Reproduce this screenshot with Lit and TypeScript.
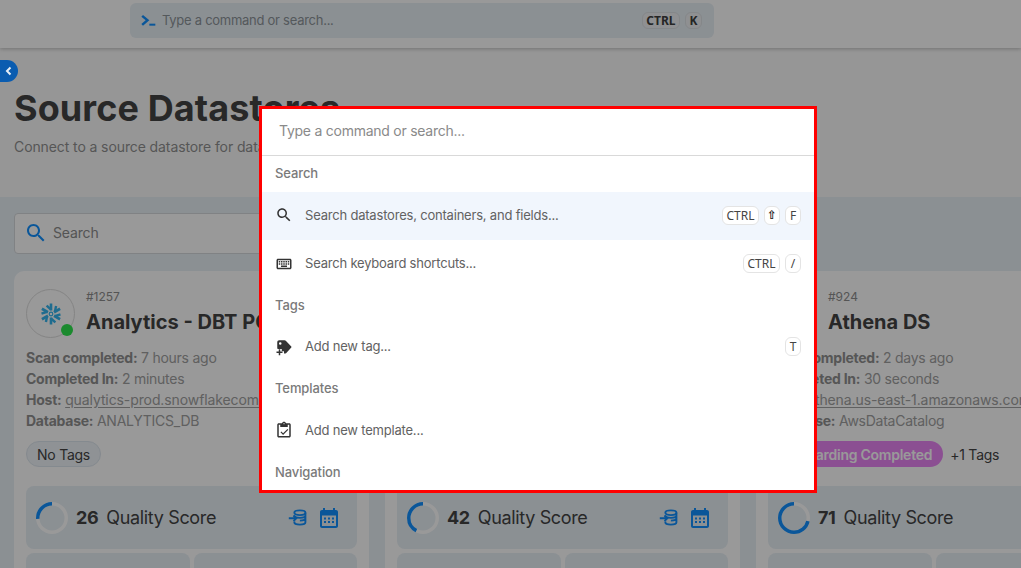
import { LitElement, css, html, svg } from "lit";
import { customElement, property } from "lit/decorators.js";

const icon = (body: unknown, size = 18) =>
  html`<svg width=${size} height=${size} viewBox="0 0 24 24" fill="currentColor">${body}</svg>`;

const ICONS = {
  search: svg`<path d="M15.5 14h-.79l-.28-.27C15.41 12.59 16 11.11 16 9.5 16 5.91 13.09 3 9.5 3S3 5.91 3 9.5 5.91 16 9.5 16c1.61 0 3.09-.59 4.23-1.57l.27.28v.79l5 4.99L20.49 19l-4.99-5zm-6 0C7.01 14 5 11.99 5 9.5S7.01 5 9.5 5 14 7.01 14 9.5 11.99 14 9.5 14z"/>`,
  keyboard: svg`<path d="M20 7v10H4V7h16m0-2H4c-1.1 0-1.99.9-1.99 2L2 17c0 1.1.9 2 2 2h16c1.1 0 2-.9 2-2V7c0-1.1-.9-2-2-2zm-9 3h2v2h-2zm0 3h2v2h-2zM8 8h2v2H8zm0 3h2v2H8zm-3 0h2v2H5zm0-3h2v2H5zm3 6h8v2H8zm6-3h2v2h-2zm0-3h2v2h-2zm3 3h2v2h-2zm0-3h2v2h-2z"/>`,
  tag: svg`<path fill-rule="evenodd" d="M3 5.5C3 4.1 4.1 3 5.5 3h7.2c.8 0 1.500.4 2 1l7 7.400c.4.4.4 1 0 1.400l-6.300 7c-.4.5-1 .7-1.600.7H12v-3H9v-3H4.500C3.600 14.500 3 14 3 13.500zM7 5.500a1.700 1.700 0 1 0 0 3.400 1.700 1.700 0 0 0 0-3.400z"/><path d="M5 15h2v3h3v2H7v3H5v-3H2v-2h3z"/>`,
  template: svg`<path d="M19 3h-4.180C14.400 1.840 13.300 1 12 1s-2.400.84-2.820 2H5c-1.100 0-2 .9-2 2v15c0 1.100.9 2 2 2h14c1.100 0 2-.9 2-2V5c0-1.100-.9-2-2-2zm-7-.25c.41 0 .75.34.75.75s-.34.75-.75.75-.75-.34-.75-.75.34-.75.75-.75zM19 20H5V5h2v3h10V5h2v15z"/><path d="m16.600 10.600 1.100 1.100-6.900 6.800-3.500-3.400 1.100-1.100 2.400 2.300z"/>`,
  prompt: svg`<path d="M2 5.500 4.500 3 14 11l-9.500 8L2 16.500 8.500 11z"/><rect x="14" y="16" width="9" height="3"/>`,
  calendar: svg`<path fill-rule="evenodd" d="M19 4h-1V2h-2v2H8V2H6v2H5C3.900 4 3 4.900 3 6v14c0 1.100.9 2 2 2h14c1.100 0 2-.9 2-2V6c0-1.100-.9-2-2-2zM5 9.500h14V20H5z"/><path d="M7 11.500h2v2H7zm4 0h2v2h-2zm4 0h2v2h-2zm-8 3.500h2v2H7zm4 0h2v2h-2zm4 0h2v2h-2z"/>`,
  database: svg`<g fill="none" stroke="currentColor" stroke-width="2.400"><ellipse cx="15" cy="6" rx="7" ry="3"/><path d="M8 9.500c0 1.700 3.100 3 7 3s7-1.300 7-3V6M8 17v1c0 1.700 3.100 3 7 3s7-1.300 7-3V6M22 13c0 1.700-3.100 3-7 3"/><path d="M1 13h9M7 9.500l3.500 3.500L7 16.500"/></g>`,
};

const snowflake = html`<svg width="24" height="24" viewBox="0 0 24 24" fill="none" stroke="#35b5ee">
  ${[0, 60, 120, 180, 240, 300].map(
    (a) => svg`<g transform="rotate(${a} 12 12)">
      <path d="M12 8.500V1.500" stroke-width="2.600"/>
      <path d="M7.600 3.600 12 7.500" stroke-width="2.400"/>
    </g>`
  )}
  <circle cx="12" cy="12" r="1.800" stroke-width="1.200"/>
</svg>`;

@customElement("score-ring")
export class ScoreRing extends LitElement {
  static styles = css`
    :host {
      display: block;
      width: 32px;
      height: 32px;
    }
    circle {
      fill: none;
      stroke-width: 3.5;
    }
    .track {
      stroke: #fff;
    }
    .value {
      stroke: #1190ff;
    }
  `;

  @property({ type: Number })
  value = 0;

  render() {
    const len = 2 * Math.PI * 14.25;
    return html`<svg width="32" height="32" viewBox="0 0 32 32">
      <circle class="track" cx="16" cy="16" r="14.25"></circle>
      <circle
        class="value"
        cx="16"
        cy="16"
        r="14.25"
        transform="translate(32 0) scale(-1 1) rotate(-90 16 16)"
        stroke-dasharray="${(len * this.value) / 100} ${len}"
      ></circle>
    </svg>`;
  }
}

interface Store {
  id?: string;
  name?: string;
  logo?: boolean;
  info?: [string, string, boolean?][];
  score: number;
  icons?: boolean;
  tags?: "none" | "onboarding";
}

const STORES: Store[] = [
  {
    id: "#1257",
    name: "Analytics - DBT POC",
    logo: true,
    info: [
      ["Scan completed:", "7 hours ago"],
      ["Completed In:", "2 minutes"],
      ["Host:", "qualytics-prod.snowflakecomputing.com", true],
      ["Database:", "ANALYTICS_DB"],
    ],
    score: 26,
    icons: true,
    tags: "none",
  },
  { score: 42, icons: true },
  {
    id: "#924",
    name: "Athena DS",
    info: [
      ["Scan completed:", "2 days ago"],
      ["Completed In:", "30 seconds"],
      ["Host:", "athena.us-east-1.amazonaws.com", true],
      ["Database:", "AwsDataCatalog"],
    ],
    score: 71,
    tags: "onboarding",
  },
];

@customElement("app-root")
export class AppRoot extends LitElement {
  static styles = css`
    :host {
      display: block;
      position: relative;
      width: 1021px;
      height: 568px;
      overflow: hidden;
      background: #fbfbfb;
      color: #444;
      font-family: Inter, "Noto Sans", "Liberation Sans", sans-serif;
    }

    .topbar {
      height: 48px;
      box-sizing: border-box;
      padding: 3px 0 0 130px;
      background: #fff;
      box-shadow: 0 1px 4px rgba(0, 0, 0, 0.25);
      position: relative;
    }
    .cmd {
      width: 584px;
      height: 35px;
      box-sizing: border-box;
      padding: 0 12px 0 10px;
      display: flex;
      align-items: center;
      border-radius: 6px;
      background: #e8f0f6;
      color: #1190ff;
      font-size: 13px;
      letter-spacing: -0.27px;
    }
    .cmd span {
      margin-left: 6px;
      padding-bottom: 2px;
      flex: 1;
      color: #8d9499;
    }

    .keys {
      display: flex;
      gap: 5px;
    }
    kbd {
      height: 17px;
      padding: 0 3.5px;
      min-width: 7px;
      box-sizing: content-box;
      display: flex;
      align-items: center;
      justify-content: center;
      border: 1px solid #e4e4e4;
      border-radius: 6px;
      background: #fff;
      color: #444;
      font: 400 12px "Noto Sans", sans-serif;
      letter-spacing: 0;
    }
    kbd.symbol {
      color: #222;
      font: 700 12px "DejaVu Sans", sans-serif;
      padding: 0 2px;
    }
    .cmd kbd {
      background: #eef1f3;
      border-color: #dde1e4;
      color: #3e3e3e;
      font-weight: 700;
      height: 15px;
    }

    .head {
      height: 149px;
      box-sizing: border-box;
      padding: 38px 14px 0;
    }
    h1 {
      margin: 0;
      font-size: 36px;
      line-height: 44px;
      font-weight: 700;
      letter-spacing: 0.1px;
    }
    .sub {
      margin: 7px 0 0;
      font-size: 14px;
      line-height: 20px;
      color: #909090;
      letter-spacing: -0.1px;
    }

    .band {
      height: 371px;
      box-sizing: border-box;
      padding: 16px 14px 0;
      background: #e8f0f6;
    }
    .filter {
      width: 500px;
      height: 41px;
      box-sizing: border-box;
      padding: 0 9px 2px;
      display: flex;
      align-items: center;
      gap: 5px;
      border: 1px solid #d5d9dc;
      border-radius: 4px;
      background: #fff;
      color: #1190ff;
      font-size: 14px;
      letter-spacing: -0.15px;
    }
    .filter span {
      color: #8c8c8c;
    }

    .cards {
      margin-top: 17px;
      display: grid;
      grid-template-columns: repeat(3, 355px);
      gap: 16px;
    }
    .card {
      height: 330px;
      box-sizing: border-box;
      padding: 18px 12px 0;
      background: #fff;
      border-radius: 10px;
    }
    .body {
      height: 197px;
    }
    .title {
      display: flex;
      gap: 11px;
      height: 49px;
    }
    .logo {
      position: relative;
      width: 47px;
      height: 47px;
      flex: none;
      display: flex;
      align-items: center;
      justify-content: center;
      border: 1px solid #ddd;
      border-radius: 50%;
    }
    .dot {
      position: absolute;
      right: 1px;
      bottom: 1px;
      width: 12px;
      height: 12px;
      border-radius: 50%;
      background: #2de64e;
    }
    .id {
      font-size: 12px;
      line-height: 16px;
      color: #8e8e8e;
    }
    .name {
      margin-top: 3px;
      font-size: 20px;
      line-height: 28px;
      font-weight: 700;
      white-space: nowrap;
    }
    .info {
      margin-top: 9px;
      font-size: 14px;
      line-height: 21px;
      color: #a0a0a0;
      white-space: nowrap;
      letter-spacing: -0.25px;
    }
    .info b {
      font-weight: 700;
      color: #909090;
    }
    .info u {
      letter-spacing: -0.1px;
      text-underline-offset: 2px;
    }
    .tags {
      margin-top: 10px;
      display: flex;
      align-items: center;
      gap: 7px;
      font-size: 14px;
      letter-spacing: -0.25px;
    }
    .pill {
      height: 26px;
      box-sizing: border-box;
      padding: 0 10px;
      display: flex;
      align-items: center;
      border-radius: 13px;
    }
    .pill.none {
      border: 1px solid #dde6ee;
      background: #eef3f8;
    }
    .pill.onboarding {
      padding: 0 11px 0 12px;
      background: #e884f4;
      color: #fff;
      font-weight: 600;
    }

    .score {
      height: 63px;
      box-sizing: border-box;
      padding: 0 16px 0 10px;
      display: flex;
      align-items: center;
      border-radius: 8px;
      background: #e8f0f6;
      font-size: 18px;
      letter-spacing: -0.35px;
    }
    .score b {
      margin: 0 8px 0 8px;
      font-weight: 700;
    }
    .score .acts {
      margin-left: auto;
      display: flex;
      gap: 10px;
      align-items: center;
      color: #1190ff;
    }
    .stats {
      margin-top: 4px;
      display: grid;
      grid-template-columns: 1fr 1fr;
      gap: 4px;
    }
    .stats div {
      height: 60px;
      border-radius: 8px;
      background: #e8f0f6;
    }

    .veil {
      position: absolute;
      inset: 0;
      background: rgba(0, 0, 0, 0.4);
    }
    .collapse {
      position: absolute;
      left: 0;
      top: 60px;
      width: 18px;
      height: 22px;
      display: flex;
      align-items: center;
      justify-content: center;
      border-radius: 0 11px 11px 0;
      background: #0a5cb0;
      color: #e6eef6;
    }

    .modal {
      position: absolute;
      left: 259px;
      top: 106px;
      width: 558px;
      height: 387px;
      box-sizing: border-box;
      border: 3px solid #ff0000;
      background: #fff;
      overflow: hidden;
      color: #626262;
    }
    .input {
      height: 47px;
      box-sizing: border-box;
      padding: 0 0 3px 17px;
      display: flex;
      align-items: center;
      border-bottom: 1px solid #d9d9d9;
      font-size: 14px;
      letter-spacing: -0.25px;
      color: #8a8a8a;
    }
    .group {
      height: 36px;
      box-sizing: border-box;
      padding: 0 0 1px 13px;
      display: flex;
      align-items: center;
      font-size: 13px;
      font-weight: 500;
      letter-spacing: -0.1px;
      color: #7a7a7a;
    }
    .input + .group {
      padding-bottom: 3px;
    }
    .group.nav {
      padding: 2px 0 0 13px;
    }
    .row {
      height: 47px;
      box-sizing: border-box;
      padding: 0 13px 0 13px;
      display: flex;
      align-items: center;
      gap: 12px;
      font-size: 13px;
      letter-spacing: -0.2px;
    }
    .row svg {
      color: #333;
      flex: none;
    }
    .row span {
      flex: 1;
    }
    .row.active {
      height: 48px;
      padding-bottom: 2px;
      background: #f1f6fd;
    }
    .row.raised span {
      padding-bottom: 2px;
    }
  `;

  private card(s: Store) {
    return html`<section class="card">
      <div class="body">
        ${s.id
          ? html`<div class="title">
                <div class="logo">
                  ${s.logo ? snowflake : null}
                  <i class="dot"></i>
                </div>
                <div>
                  <div class="id">${s.id}</div>
                  <div class="name">${s.name}</div>
                </div>
              </div>
              <div class="info">
                ${s.info?.map(
                  ([k, v, link]) =>
                    html`<div><b>${k}</b> ${link ? html`<u>${v}</u>` : v}</div>`
                )}
              </div>
              <div class="tags">
                ${s.tags === "none"
                  ? html`<div class="pill none">No Tags</div>`
                  : html`<div class="pill onboarding">Onboarding Completed</div>
                      <div>+1 Tags</div>`}
              </div>`
          : null}
      </div>
      <div class="score">
        <score-ring .value=${s.score}></score-ring>
        <b>${s.score}</b> Quality Score
        ${s.icons
          ? html`<div class="acts">
              ${icon(ICONS.database, 19)} ${icon(ICONS.calendar, 24)}
            </div>`
          : null}
      </div>
      <div class="stats"><div></div><div></div></div>
    </section>`;
  }

  private keys(list: string[]) {
    return html`<div class="keys">
      ${list.map((k) => html`<kbd class=${k === "⇧" ? "symbol" : ""}>${k}</kbd>`)}
    </div>`;
  }

  render() {
    return html`
      <header class="topbar">
        <div class="cmd">
          ${icon(ICONS.prompt, 16)}
          <span>Type a command or search...</span>
          ${this.keys(["CTRL", "K"])}
        </div>
      </header>
      <div class="head">
        <h1>Source Datastores</h1>
        <p class="sub">Connect to a source datastore for data quality analysis</p>
      </div>
      <main class="band">
        <div class="filter">${icon(ICONS.search, 24)}<span>Search</span></div>
        <div class="cards">${STORES.map((s) => this.card(s))}</div>
      </main>

      <div class="veil"></div>
      <div class="collapse">
        <svg width="10" height="10" viewBox="0 0 10 10" fill="none" stroke="currentColor" stroke-width="2">
          <path d="M6.500 1.500 3 5l3.500 3.500" />
        </svg>
      </div>

      <div class="modal">
        <div class="input">Type a command or search...</div>
        <div class="group">Search</div>
        <div class="row active">
          ${icon(ICONS.search)}<span>Search datastores, containers, and fields...</span>
          ${this.keys(["CTRL", "⇧", "F"])}
        </div>
        <div class="row raised">
          ${icon(ICONS.keyboard)}<span>Search keyboard shortcuts...</span>
          ${this.keys(["CTRL", "/"])}
        </div>
        <div class="group">Tags</div>
        <div class="row raised">
          ${icon(ICONS.tag)}<span>Add new tag...</span> ${this.keys(["T"])}
        </div>
        <div class="group">Templates</div>
        <div class="row">${icon(ICONS.template)}<span>Add new template...</span></div>
        <div class="group nav">Navigation</div>
      </div>
    `;
  }
}
